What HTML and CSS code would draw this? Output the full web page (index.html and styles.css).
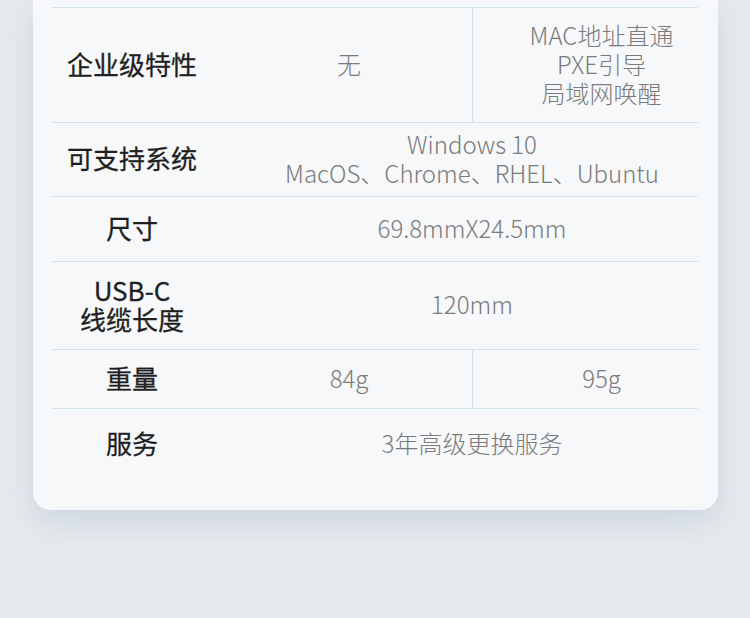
FILE: index.html
```html
<!DOCTYPE html>
<html lang="zh-CN">
<head>
    <meta charset="UTF-8">
    <meta name="viewport" content="width=device-width, initial-scale=1.0">
    <title>规格参数</title>
    <link rel="stylesheet" href="styles.css">
</head>
<body>

<div class="card">
    <div class="spec">
        <div class="row row-features">
            <div class="label">企业级特性</div>
            <div class="value col-a">无</div>
            <div class="value col-b">MAC地址直通<br>PXE引导<br>局域网唤醒</div>
        </div>
        <div class="row row-os">
            <div class="label">可支持系统</div>
            <div class="value span">Windows 10<br>MacOS、Chrome、RHEL、Ubuntu</div>
        </div>
        <div class="row row-size">
            <div class="label">尺寸</div>
            <div class="value span">69.8mmX24.5mm</div>
        </div>
        <div class="row row-cable">
            <div class="label">USB-C<br>线缆长度</div>
            <div class="value span">120mm</div>
        </div>
        <div class="row row-weight">
            <div class="label">重量</div>
            <div class="value col-a">84g</div>
            <div class="value col-b">95g</div>
        </div>
        <div class="row row-service">
            <div class="label">服务</div>
            <div class="value span">3年高级更换服务</div>
        </div>
    </div>
</div>

</body>
</html>
```

FILE: styles.css
```css
body {
    margin: 0;
    background-color: #e6eaee;
    font-family: 'Noto Sans CJK SC', 'Noto Sans', sans-serif;
    height: 618px;
    overflow: hidden;
}

.card {
    width: 646px;
    margin-left: 33px;
    padding: 7px 20px 31px 19px;
    background-color: #f6f8fa;
    border-radius: 0 0 18px 18px;
    box-shadow: 0 12px 30px rgba(140, 160, 185, 0.28);
}

.spec {
    border-top: 1px solid #d3e3ec;
}

.row {
    display: grid;
    grid-template-columns: 160px 260px 1fr;
    border-bottom: 1px solid #d3e3ec;
}

.row:last-child {
    border-bottom: none;
}

.label,
.value {
    display: flex;
    align-items: center;
    justify-content: center;
    text-align: center;
    line-height: 29px;
    padding-bottom: 4px;
}

.label {
    font-size: 26px;
    font-weight: 400;
    color: #1f1f1f;
    -webkit-text-stroke: 0.3px #1f1f1f;
}

.value {
    font-size: 24px;
    font-weight: 300;
    color: #7b7b7b;
}

.col-a {
    padding-left: 14px;
}

.col-b {
    padding-left: 32px;
    border-left: 1px solid #d3e3ec;
}

.span {
    grid-column: 2 / 4;
    padding-left: 34px;
}

.row-features { height: 114px; }
.row-os { height: 73px; }
.row-size { height: 64px; }
.row-cable { height: 87px; }
.row-weight { height: 58px; }
.row-service { height: 70px; }
```
